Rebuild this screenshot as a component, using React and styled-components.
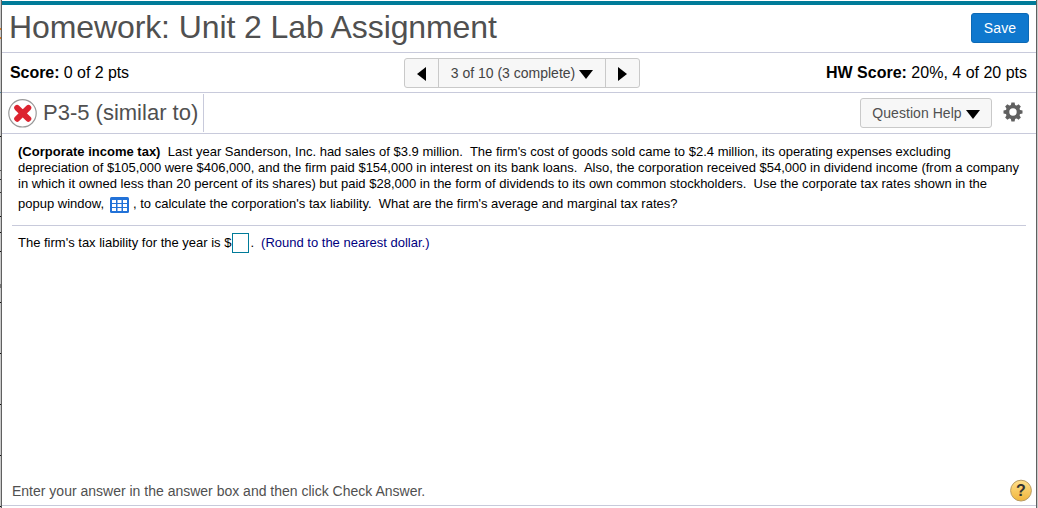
import React from "react";
import styled, { createGlobalStyle } from "styled-components";

const Global = createGlobalStyle`
  * { box-sizing: border-box; }
  body { margin: 0; overflow: hidden; background: #fff; font-family: "Liberation Sans", Arial, sans-serif; }
  button { font-family: inherit; }
`;
const Frame = styled.div`
  width: 1038px; height: 508px; display: flex; background: #fff;
`;
const Edge = styled.div`
  flex: none; width: ${p => p.$w}px; background: #c9c9c9;
  border-${p => p.$line}: 1px solid #606060;
`;
const LeftEdge = styled(Edge)`
  display: flex; flex-direction: column;
`;
const Tick = styled.div`
  flex: none; width: 1px; height: ${p => p.$h || 1}px; margin-top: ${p => p.$gap}px; background: ${p => p.$c || "#111"};
`;
const Window = styled.main`
  flex: 1; min-width: 0; display: flex; flex-direction: column; padding-top: 1px;
`;
const Header = styled.header`
  height: 52px; flex: none; border-top: 4px solid #007b99; border-bottom: 1px solid #c8cadb;
  display: flex; justify-content: space-between; align-items: flex-start; padding: 0 7px 0 7px;
`;
const Title = styled.h1`
  margin: 4px 0 0; font-size: 32px; line-height: 37px; font-weight: 400; color: #505050; white-space: nowrap;
  letter-spacing: -0.1px;
`;
const SaveButton = styled.button`
  margin-top: 8px; width: 58px; height: 30px; padding: 0; border: 1px solid #0c69b5; border-radius: 3px;
  background: #0f78ce; color: #fff; font-size: 14px; line-height: 28px; letter-spacing: 0.1px;
`;
const ScoreBar = styled.section`
  height: 40px; flex: none; border-bottom: 1px solid #c8cadb; padding: 0 9px 0 8px;
  display: flex; align-items: center; justify-content: space-between;
`;
const Score = styled.div`
  font-size: 16px; line-height: 20px; color: #000; white-space: nowrap; width: ${p => p.$w}px;
  text-align: ${p => p.$align || "left"}; letter-spacing: ${p => p.$s || 0}px;
`;
const Pager = styled.nav`
  display: flex; width: 236px; height: 30px; border: 1px solid #c9c9c9; border-radius: 3px; background: #f7f7f7; margin-top: 1px;
`;
const PagerButton = styled.button`
  border: 0; padding: 0; background: transparent; display: flex; align-items: center; justify-content: center;
  width: ${p => p.$w}px; flex: none; font-size: 14px; color: #444; gap: 4px; white-space: nowrap;
  & + & { border-left: 1px solid #c9c9c9; }
`;
const Arrow = styled.svg`
  display: block; flex: none; position: relative; top: 1px;
`;
const QuestionBar = styled.section`
  height: 41px; flex: none; border-bottom: 1px solid #c8cadb; display: flex; align-items: flex-start; padding: 1px 13px 0 6px;
`;
const QuestionTab = styled.div`
  height: 38px; width: 196px; display: flex; align-items: center; border-right: 1px solid #c8cadb; margin-right: auto; gap: 6px;
  font-size: 22px; color: #505050; white-space: nowrap; line-height: 26px;
`;
const HelpButton = styled.button`
  margin: 4px 11px 0 0; width: 132px; height: 30px; border: 1px solid #c9c9c9; border-radius: 3px; background: #f7f7f7;
  padding: 0; display: flex; align-items: center; justify-content: center; gap: 4px; font-size: 14px; color: #505050;
  letter-spacing: 0.05px;
`;
const Gear = styled.svg`
  display: block; margin-top: 8px;
`;
const Content = styled.section`
  flex: 1; padding: 10px 10px 0; color: #000; font-size: 13px; line-height: 16px;
`;
const Problem = styled.div`
  height: 82px; padding-left: 6px; border-bottom: 1px solid #c8cadb;
`;
const Line = styled.div`
  height: ${p => p.$h || 16}px; line-height: ${p => p.$h || 16}px; white-space: pre; display: flex; align-items: center;
  letter-spacing: ${p => p.$s || 0}px;
`;
const TableIcon = styled.svg`
  display: block; margin: 2px 4px 0 6px; flex: none;
`;
const Answer = styled.div`
  display: flex; align-items: center; padding: 7px 0 0 6px; white-space: pre; height: 27px;
`;
const AnswerInput = styled.input`
  width: 17px; height: 20px; padding: 0; border: 1px solid #007b99; border-radius: 0; background: #fff; margin: 0 1px;
`;
const Note = styled.span`
  color: #000080; margin-left: 7px;
`;
const Footer = styled.footer`
  flex: none; height: 29px; margin-bottom: 2px; border-bottom: 1px solid #c8cadb; padding: 0 4px 0 10px;
  display: flex; align-items: center; justify-content: space-between; font-size: 14px; color: #505050;
`;

const Triangle = ({ d, w, h }) => (
  <Arrow width={w} height={h} viewBox={`0 0 ${w} ${h}`}><path d={d} fill="#000" /></Arrow>
);
const Down = () => <Triangle w={14} h={9} d="M0 0H14L7 9Z" />;

export default function App() {
  return (
    <>
      <Global />
      <Frame>
        <LeftEdge $w={2} $line="right">
          <Tick $gap={28} $h={2} $c="#d97820" />
          <Tick $gap={7} $h={2} $c="#d97820" />
          <Tick $gap={53} $c="#4f88a0" />
          <Tick $gap={43} />
          <Tick $gap={33} $c="#555" />
          <Tick $gap={8} $c="#333" />
          <Tick $gap={12} $c="#333" />
          <Tick $gap={23} />
          <Tick $gap={15} />
          <Tick $gap={18} />
          <Tick $gap={32} $h={4} $c="#777" />
          <Tick $gap={14} />
          <Tick $gap={50} />
          <Tick $gap={50} />
          <Tick $gap={50} />
          <Tick $gap={50} />
        </LeftEdge>
        <Window>
          <Header>
            <Title>Homework: Unit 2 Lab Assignment</Title>
            <SaveButton>Save</SaveButton>
          </Header>
          <ScoreBar>
            <Score $w={394} $s={-0.06}><b>Score:</b> 0 of 2 pts</Score>
            <Pager>
              <PagerButton $w={33} aria-label="Previous question"><Triangle w={9} h={14} d="M9 0V14L0 7Z" /></PagerButton>
              <PagerButton $w={167}>3 of 10 (3 complete)<Down /></PagerButton>
              <PagerButton $w={34} aria-label="Next question"><Triangle w={9} h={14} d="M0 0V14L9 7Z" /></PagerButton>
            </Pager>
            <Score $w={387} $align="right"><b>HW Score:</b> 20%, 4 of 20 pts</Score>
          </ScoreBar>
          <QuestionBar>
            <QuestionTab>
              <svg width="29" height="29" viewBox="0 0 29 29">
                <circle cx="14.5" cy="14.3" r="13.7" fill="#fff" stroke="#999" strokeWidth="1.2" />
                <path d="M9.1 8.8L20.4 19.8M20.4 8.8L9.1 19.8" stroke="#dc2430" strokeWidth="5.8" strokeLinecap="round" />
              </svg>
              P3-5 (similar to)
            </QuestionTab>
            <HelpButton>Question Help<Down /></HelpButton>
            <Gear width="20" height="20" viewBox="-10 -10 20 20" fill="#606060">
              {[0, 45, 90, 135, 180, 225, 270, 315].map(a => (
                <path key={a} d="M-2.3 -6L-1.6 -9.5H1.6L2.3 -6Z" transform={`rotate(${a})`} />
              ))}
              <circle r="5.5" fill="none" stroke="#606060" strokeWidth="3.6" />
            </Gear>
          </QuestionBar>
          <Content>
            <Problem>
              <Line $s={0.007}><b>(Corporate income tax)</b>{"  Last year Sanderson, Inc. had sales of $3.9 million.  The firm's cost of goods sold came to $2.4 million, its operating expenses excluding"}</Line>
              <Line>depreciation of $105,000 were $406,000, and the firm paid $154,000 in interest on its bank loans.  Also, the corporation received $54,000 in dividend income (from a company</Line>
              <Line>in which it owned less than 20 percent of its shares) but paid $28,000 in the form of dividends to its own common stockholders.  Use the corporate tax rates shown in the</Line>
              <Line $h={24}>
                popup window,
                <TableIcon width="19" height="16" viewBox="0 0 19 16">
                  <rect width="19" height="16" rx="1.5" fill="#2272d8" />
                  <path fill="#fff" d="M2 3h4v3H2zM7.5 3h4v3h-4zM13 3h4v3h-4zM2 7h4v3H2zM7.5 7h4v3h-4zM13 7h4v3h-4zM2 11h4v3H2zM7.5 11h4v3h-4zM13 11h4v3h-4z" />
                </TableIcon>
                {", to calculate the corporation's tax liability.  What are the firm's average and marginal tax rates?"}
              </Line>
            </Problem>
            <Answer>
              The firm's tax liability for the year is $<AnswerInput aria-label="Tax liability" />.
              <Note>(Round to the nearest dollar.)</Note>
            </Answer>
          </Content>
          <Footer>
            Enter your answer in the answer box and then click Check Answer.
            <svg width="22" height="24" viewBox="0 0 22 24">
              <defs><linearGradient id="gold" x1="0" y1="0" x2="0" y2="1"><stop stopColor="#ffe08c" /><stop offset="1" stopColor="#f0b53c" /></linearGradient></defs>
              <circle cx="11" cy="11.6" r="10.4" fill="url(#gold)" stroke="#b89b62" strokeWidth="1" />
              <text x="11" y="17.2" textAnchor="middle" fontSize="16" fontWeight="700" fill="#333">?</text>
            </svg>
          </Footer>
        </Window>
        <Edge $w={2} $line="left" />
      </Frame>
    </>
  );
}
